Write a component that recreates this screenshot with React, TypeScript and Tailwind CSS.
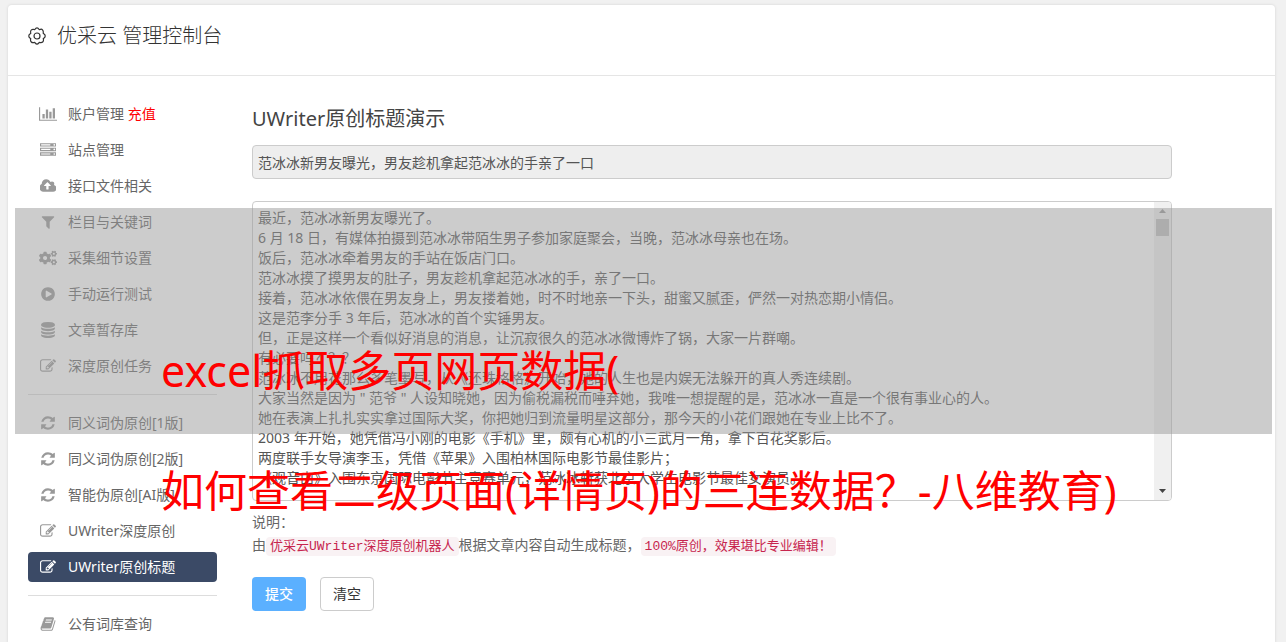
import { useState } from 'react';
import { FaCogs } from 'react-icons/fa';
import clsx from 'clsx';

type Glyph = { width: number; d: string };

const GLYPHS: Record<string, Glyph> = {
  chart: {
    width: 2048,
    d: 'M640 896v512h-256v-512h256zm384-512v1024h-256v-1024h256zm1024 1152v128h-2048v-1536h128v1408h1920zm-640-896v768h-256v-768h256zm384-384v1152h-256v-1152h256z',
  },
  server: {
    width: 1792,
    d: 'M128 1408h1024v-128h-1024v128zm0-512h1024v-128h-1024v128zm1568 448q0-40-28-68t-68-28-68 28-28 68 28 68 68 28 68-28 28-68zm-1568-960h1024v-128h-1024v128zm1568 448q0-40-28-68t-68-28-68 28-28 68 28 68 68 28 68-28 28-68zm0-512q0-40-28-68t-68-28-68 28-28 68 28 68 68 28 68-28 28-68zm96 832v384h-1792v-384h1792zm0-512v384h-1792v-384h1792zm0-512v384h-1792v-384h1792z',
  },
  cloud: {
    width: 1856,
    d: 'M1216 864q0-14-9-23l-352-352q-9-9-23-9t-23 9l-351 351q-10 12-10 24 0 14 9 23t23 9h224v352q0 13 9.5 22.5t22.5 9.5h192q13 0 22.5-9.5t9.5-22.5v-352h224q13 0 22.5-9.5t9.5-22.5zm640 288q0 159-112.5 271.5t-271.5 112.5h-1088q-185 0-316.5-131.5t-131.5-316.5q0-130 70-240t188-165q-2-30-2-43 0-212 150-362t362-150q156 0 285.5 87t188.5 231q71-62 166-62 106 0 181 75t75 181q0 76-41 138 130 31 213.5 135.5t83.5 238.5z',
  },
  filter: {
    width: 1792,
    d: 'M1595 295q17 41-14 70l-493 493v742q0 42-39 59-13 5-25 5-27 0-45-19l-256-256q-19-19-19-45v-486l-493-493q-31-29-14-70 17-39 59-39h1280q42 0 59 39z',
  },
  play: {
    width: 1792,
    d: 'M896 128q209 0 385.5 103t279.5 279.5 103 385.5-103 385.5-279.5 279.5-385.5 103-385.5-103-279.5-279.5-103-385.5 103-385.5 279.5-279.5 385.5-103zm384 823q32-18 32-55t-32-55l-544-320q-31-19-64-1-32 19-32 56v640q0 37 32 56 16 8 32 8 17 0 32-9z',
  },
  database: {
    width: 1792,
    d: 'M896 768q237 0 443-43t325-127v170q0 69-103 128t-280 93.5-385 34.5-385-34.5-280-93.5-103-128v-170q119 84 325 127t443 43zm0 768q237 0 443-43t325-127v170q0 69-103 128t-280 93.5-385 34.5-385-34.5-280-93.5-103-128v-170q119 84 325 127t443 43zm0-384q237 0 443-43t325-127v170q0 69-103 128t-280 93.5-385 34.5-385-34.5-280-93.5-103-128v-170q119 84 325 127t443 43zm0-1152q208 0 385 34.5t280 93.5 103 128v128q0 69-103 128t-280 93.5-385 34.5-385-34.5-280-93.5-103-128v-128q0-69 103-128t280-93.5 385-34.5z',
  },
  edit: {
    width: 1792,
    d: 'M888 1184l116-116-152-152-116 116v56h96v96h56zm440-720q-16-16-33 1l-350 350q-17 17-1 33t33-1l350-350q17-17 1-33zm80 594v190q0 119-84.5 203.5t-203.5 84.5h-832q-119 0-203.5-84.5t-84.5-203.5v-832q0-119 84.5-203.5t203.5-84.5h832q63 0 117 25 15 7 18 23 3 17-9 29l-49 49q-14 14-32 8-23-6-45-6h-832q-66 0-113 47t-47 113v832q0 66 47 113t113 47h832q66 0 113-47t47-113v-126q0-13 9-22l64-64q15-15 35-7t20 29zm-96-738l288 288-672 672h-288v-288zm444 132l-92 92-288-288 92-92q28-28 68-28t68 28l152 152q28 28 28 68t-28 68z',
  },
  refresh: {
    width: 1792,
    d: 'M1639 1056q0 5-1 7-64 268-268 434.5t-478 166.5q-146 0-282.5-55t-243.5-157l-129 129q-19 19-45 19t-45-19-19-45v-448q0-26 19-45t45-19h448q26 0 45 19t19 45-19 45l-137 137q71 66 161 102t187 36q134 0 250-65t186-179q11-17 53-117 8-23 30-23h192q13 0 22.5 9.5t9.5 22.5zm25-800v448q0 26-19 45t-45 19h-448q-26 0-45-19t-19-45 19-45l138-138q-148-137-349-137-134 0-250 65t-186 179q-11 17-53 117-8 23-30 23h-199q-13 0-22.5-9.5t-9.5-22.5v-7q65-268 270-434.5t480-166.5q146 0 284 55.5t245 156.5l130-129q19-19 45-19t45 19 19 45z',
  },
  book: {
    width: 1792,
    d: 'M1703 478q40 57 18 129l-275 906q-19 64-76.5 107.5t-122.5 43.5h-923q-77 0-148.5-53.5t-99.5-131.5q-24-67-2-127 0-4 3-27t4-37q1-8-3-21.5t-3-19.5q2-11 8-21t16.5-23.5 16.5-23.5q23-38 45-91.5t30-91.5q3-10 .5-30t-.5-28q3-11 17-28t17-23q21-36 42-92t25-90q1-9-2.5-32t.5-28q4-13 22-30.5t22-22.5q19-26 42.5-84.5t27.5-96.5q1-8-3-25.5t-2-26.5q2-8 9-18t18-23 17-21q8-12 16.5-30.5t15-35 16-36 19.5-32 26.5-23.5 36-11.5 47.5 5.5l-1 3q38-9 51-9h761q74 0 114 56t18 130l-274 906q-36 119-71.5 153.5t-128.5 34.5h-869q-27 0-38 15-11 16-1 43 24 70 144 70h923q29 0 56-15.5t35-41.5l300-987q7-22 5-57 38 15 59 43zm-1064 2q-4 13 2 22.5t20 9.5h608q13 0 25.5-9.5t16.5-22.5l21-64q4-13-2-22.5t-20-9.5h-608q-13 0-25.5 9.5t-16.5 22.5zm-83 256q-4 13 2 22.5t20 9.5h608q13 0 25.5-9.5t16.5-22.5l21-64q4-13-2-22.5t-20-9.5h-608q-13 0-25.5 9.5t-16.5 22.5z',
  },
};

function MenuIcon({ name }: { name: string }) {
  if (name === 'cogs') return <FaCogs className="h-4 w-[18px]" />;
  const glyph = GLYPHS[name];
  return (
    <svg viewBox={`0 0 ${glyph.width} 1792`} className="h-4 w-auto" fill="currentColor" aria-hidden="true">
      <path d={glyph.d} />
    </svg>
  );
}

function GearIcon() {
  return (
    <svg viewBox="0 0 18 18" className="size-[18px]" fill="none" stroke="currentColor" strokeWidth="1.2" strokeLinejoin="round" aria-hidden="true">
      <path d="M7.4 1.9Q7.7.8 9 .8T10.6 1.9L11.3 2.6L12.3 2.4Q13.6 1.8 14.5 2.8T15.3 5.2L15.2 6.3L16.1 7Q17.2 7.7 17.2 9T16.1 11L15.2 11.7L15.5 12.7Q15.6 14.2 14.7 15T12.3 15.6L11.3 15.4L10.6 16.1Q10 17.2 9 17.2T7.4 16.1L6.7 15.4L5.7 15.6Q4.2 15.9 3.3 15T2.5 12.7L2.8 11.7L1.9 11Q.8 10.3.8 9T1.9 7L2.8 6.3L2.6 5.2Q2.4 3.7 3.4 2.9T5.7 2.4L6.7 2.6Z" />
      <circle cx="9" cy="9" r="3" />
    </svg>
  );
}

type MenuItem = { icon: string; label: string; tag?: string; active?: boolean };

const MENU: MenuItem[][] = [
  [
    { icon: 'chart', label: '账户管理', tag: '充值' },
    { icon: 'server', label: '站点管理' },
    { icon: 'cloud', label: '接口文件相关' },
    { icon: 'filter', label: '栏目与关键词' },
    { icon: 'cogs', label: '采集细节设置' },
    { icon: 'play', label: '手动运行测试' },
    { icon: 'database', label: '文章暂存库' },
    { icon: 'edit', label: '深度原创任务' },
  ],
  [
    { icon: 'refresh', label: '同义词伪原创[1版]' },
    { icon: 'refresh', label: '同义词伪原创[2版]' },
    { icon: 'refresh', label: '智能伪原创[AI版]' },
    { icon: 'edit', label: 'UWriter深度原创' },
    { icon: 'edit', label: 'UWriter原创标题', active: true },
  ],
  [{ icon: 'book', label: '公有词库查询' }],
];

const ARTICLE = `最近，范冰冰新男友曝光了。
6 月 18 日，有媒体拍摄到范冰冰带陌生男子参加家庭聚会，当晚，范冰冰母亲也在场。
饭后，范冰冰牵着男友的手站在饭店门口。
范冰冰摸了摸男友的肚子，男友趁机拿起范冰冰的手，亲了一口。
接着，范冰冰依偎在男友身上，男友搂着她，时不时地亲一下头，甜蜜又腻歪，俨然一对热恋期小情侣。
这是范李分手 3 年后，范冰冰的首个实锤男友。
但，正是这样一个看似好消息的消息，让沉寂很久的范冰冰微博炸了锅，大家一片群嘲。
有必要吗？？？
范冰冰不用花那么多笔墨写，从《还珠格格》开始，她的人生也是内娱无法躲开的真人秀连续剧。
大家当然是因为 " 范爷 " 人设知晓她，因为偷税漏税而唾弃她，我唯一想提醒的是，范冰冰一直是一个很有事业心的人。
她在表演上扎扎实实拿过国际大奖，你把她归到流量明星这部分，那今天的小花们跟她在专业上比不了。
2003 年开始，她凭借冯小刚的电影《手机》里，颇有心机的小三武月一角，拿下百花奖影后。
两度联手女导演李玉，凭借《苹果》入围柏林国际电影节最佳影片；
《观音山》入围东京国际电影节主竞赛单元，范冰冰斩获北京大学生电影节最佳女演员。`;

function Sidebar() {
  return (
    <nav className="w-[189px] shrink-0">
      {MENU.map((group, i) => (
        <ul key={i} className={clsx('flex flex-col gap-1.5', i > 0 && 'mt-[13px] border-t border-[#ddd] pt-[13px]')}>
          {group.map((item) => (
            <li key={item.label}>
              <a
                href="#"
                className={clsx(
                  'flex h-[30px] items-center gap-2.5 rounded px-2.5',
                  item.active ? 'bg-[#3b4a66] text-white' : 'text-[#666]'
                )}
              >
                <span className={clsx('flex w-5 justify-center', item.active ? 'text-white' : 'text-[#999]')}>
                  <MenuIcon name={item.icon} />
                </span>
                <span className="whitespace-nowrap">
                  {item.label}
                  {item.tag && <span className="text-[#f00]"> {item.tag}</span>}
                </span>
              </a>
            </li>
          ))}
        </ul>
      ))}
    </nav>
  );
}

function Code({ children }: { children: string }) {
  return (
    <code className="rounded bg-[#f9f2f4] px-1 py-0.5 font-['Liberation_Mono','Noto_Sans_CJK_SC',monospace] text-[13px] text-[#c7254e]">
      {children}
    </code>
  );
}

export default function App() {
  const [title, setTitle] = useState('范冰冰新男友曝光，男友趁机拿起范冰冰的手亲了一口');
  const [content, setContent] = useState(ARTICLE);

  const handleClear = () => {
    setTitle('');
    setContent('');
  };

  return (
    <div className="relative h-screen overflow-hidden bg-[#f1f1f1] pt-[5px] pr-[11px] pl-2 font-['Noto_Sans','Noto_Sans_CJK_SC',sans-serif] text-sm text-[#555]">
      <div className="min-h-full rounded-t bg-white shadow-[0_0_2px_1px_#e2e2e2]">
        <header className="flex h-[71px] items-center gap-[11px] border-b border-[#e5e5e5] px-5 pb-2 text-[#333]">
          <GearIcon />
          <h1 className="text-xl font-light">优采云 管理控制台</h1>
        </header>

        <div className="flex gap-[35px] px-5 pt-[23px]">
          <Sidebar />

          <form className="max-w-[920px] min-w-0 flex-1" onSubmit={(e) => e.preventDefault()}>
            <h2 className="mt-[5px] mb-[11px] text-xl leading-[30px] text-[#444]">UWriter原创标题演示</h2>
            <input
              type="text"
              aria-label="标题"
              value={title}
              readOnly
              className="block h-[34px] w-full rounded border border-[#ccc] bg-[#eee] px-[5px] outline-none"
            />

            <div className="mt-[22px] flex h-[300px] overflow-hidden rounded border border-[#ccc]">
              <textarea
                aria-label="文章内容"
                value={content}
                onChange={(e) => setContent(e.target.value)}
                className="min-w-0 flex-1 resize-none overflow-hidden px-[5px] py-1.5 leading-5 outline-none"
              />
              {/* Scrollbar track */}
              <div className="flex w-[17px] flex-col items-center bg-[#f0f0f0] py-[7px]">
                <svg viewBox="0 0 7 4" className="h-1 w-[7px]" fill="#999" aria-hidden="true">
                  <path d="M0 4L3.5 0L7 4z" />
                </svg>
                <div className="mt-1.5 h-[17px] w-[13px] bg-[#c1c1c1]" />
                <svg viewBox="0 0 7 4" className="mt-auto h-1 w-[7px]" fill="#444" aria-hidden="true">
                  <path d="M0 0L3.5 4L7 0z" />
                </svg>
              </div>
            </div>

            <div className="mt-[9px] leading-[23px] text-[#666]">
              <p>说明：</p>
              <p>
                由<Code>优采云UWriter深度原创机器人</Code>根据文章内容自动生成标题，<Code>100%原创，效果堪比专业编辑！</Code>
              </p>
            </div>

            <div className="mt-[19px] flex gap-3.5">
              <button type="submit" className="h-[34px] w-[54px] rounded bg-[#5bb0ff] font-medium text-white">
                提交
              </button>
              <button type="button" onClick={handleClear} className="h-[34px] w-[54px] rounded border border-[#ccc] bg-white text-[#333]">
                清空
              </button>
            </div>
          </form>
        </div>
      </div>

      {/* Caption banner over the console */}
      <div className="pointer-events-none absolute top-[208px] right-3.5 left-[15px] h-[226px] bg-[#999]/50 pt-[103px] pl-[146px] text-[43px] leading-[120px] whitespace-nowrap text-[#f00]">
        <p>excel抓取多页网页数据(</p>
        <p>如何查看二级页面(详情页)的三连数据？-八维教育)</p>
      </div>
    </div>
  );
}
